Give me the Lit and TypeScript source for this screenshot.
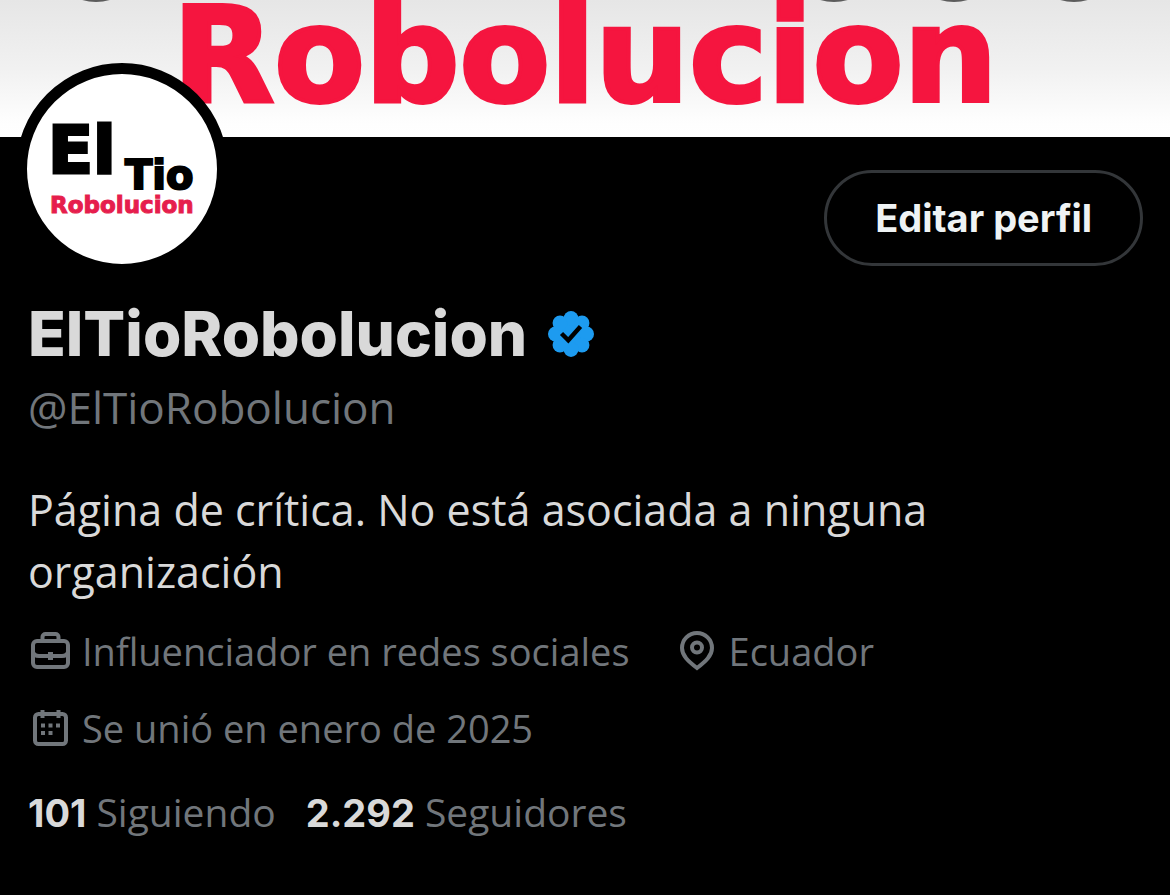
import { LitElement, html, css, svg } from "lit";
import { customElement } from "lit/decorators.js";

const badgeLobes = Array.from({ length: 8 }, (_, i) => {
  const angle = (i * Math.PI) / 4;
  return svg`<circle cx=${24 + 15.6 * Math.sin(angle)} cy=${24 - 15.6 * Math.cos(angle)} r="7.4" />`;
});

@customElement("profile-avatar")
export class ProfileAvatar extends LitElement {
  static styles = css`
    :host {
      display: block;
      width: 190px;
      height: 190px;
      border: 11px solid #000;
      border-radius: 50%;
      background: #fff;
      overflow: hidden;
    }
    .logo {
      display: block;
      width: 100%;
      height: 100%;
      font-family: "DejaVu Sans", sans-serif;
      font-weight: 700;
    }
    .dark {
      fill: #000;
      stroke: #000;
      stroke-width: 2px;
    }
    .red {
      fill: #e61e4d;
      stroke: #e61e4d;
      stroke-width: 1px;
    }
    .large {
      font-size: 66px;
      stroke-width: 3px;
    }
    .medium {
      font-size: 40px;
    }
    .small {
      font-size: 23px;
    }
  `;

  render() {
    return html`
      <svg class="logo" viewBox="0 0 190 190" role="img" aria-label="El Tio Robolucion">
        <text class="dark large" x="21" y="99">El</text>
        <text class="dark medium" x="98" y="115">Tio</text>
        <text class="red small" x="23" y="139">Robolucion</text>
      </svg>
    `;
  }
}

@customElement("app-root")
export class AppRoot extends LitElement {
  static styles = css`
    :host {
      display: block;
      min-height: 100vh;
      background: #000;
      color: #d9d9d9;
      font-family: "Open Sans", "Noto Sans", sans-serif;
    }
    .banner {
      display: grid;
      height: 137px;
      overflow: hidden;
      background: linear-gradient(#e6e6e6 0%, #f1f1f1 50%, #fefefe 90%, #fff 100%);
    }
    .banner-title {
      grid-area: 1 / 1;
      justify-self: center;
      margin: 0;
      color: #f5153f;
      -webkit-text-stroke: 4px #f5153f;
      font-family: "DejaVu Sans", sans-serif;
      font-size: 132px;
      font-weight: 700;
      line-height: 110px;
    }
    .toolbar {
      grid-area: 1 / 1;
      align-self: start;
      display: flex;
      gap: 24px;
      margin-top: -94px;
      padding: 0 48px;
    }
    .tool {
      width: 96px;
      height: 96px;
      padding: 0;
      border: 0;
      border-radius: 50%;
      background: #5c5c5c;
    }
    .tool:first-child {
      margin-right: auto;
    }
    .profile {
      padding: 0 27px 56px 28px;
    }
    .top {
      display: flex;
      align-items: flex-start;
      justify-content: space-between;
    }
    .avatar {
      margin: -74px 0 0 -12px;
    }
    .edit {
      box-sizing: border-box;
      height: 96px;
      margin-top: 33px;
      padding: 0 48px;
      border: 3px solid #333639;
      border-radius: 48px;
      background: #000;
      color: #eff3f4;
      font-family: "Inter", sans-serif;
      font-size: 38px;
      font-weight: 700;
    }
    .name {
      display: flex;
      align-items: center;
      gap: 20px;
      margin: 21px 0 0;
      font-family: "Inter", sans-serif;
      font-size: 62px;
      font-weight: 800;
      line-height: 76px;
    }
    .badge {
      width: 48px;
      height: 48px;
      fill: #1d9bf0;
    }
    .tick {
      fill: none;
      stroke: #000;
      stroke-width: 4.4;
    }
    .handle {
      margin: 5px 0 0;
      color: #71767b;
      font-size: 44px;
      line-height: 60px;
    }
    .bio {
      margin: 42px 0 0;
      font-size: 43px;
      line-height: 62px;
    }
    .meta {
      display: flex;
      flex-wrap: wrap;
      column-gap: 45px;
      margin: 10px 0 0;
      padding: 0;
      list-style: none;
      color: #71767b;
      font-size: 38px;
      line-height: 77px;
    }
    .item {
      display: flex;
      align-items: center;
      gap: 10px;
    }
    .joined {
      flex-basis: 100%;
    }
    .icon {
      width: 44px;
      height: 44px;
      fill: none;
      stroke: #71767b;
      stroke-width: 4;
    }
    .dots {
      fill: #71767b;
      stroke: none;
    }
    .stats {
      display: flex;
      gap: 30px;
      margin-top: 17px;
      font-size: 39px;
      line-height: 56px;
    }
    .stat {
      display: flex;
      align-items: baseline;
      gap: 10px;
      color: #71767b;
      text-decoration: none;
    }
    .count {
      color: #d9d9d9;
      font-family: "Inter", sans-serif;
      font-size: 38px;
      font-weight: 700;
    }
  `;

  render() {
    return html`
      <header class="banner">
        <p class="banner-title">Robolucion</p>
        <nav class="toolbar">
          <button class="tool" aria-label="Atrás"></button>
          <button class="tool" aria-label="Buscar"></button>
          <button class="tool" aria-label="Compartir"></button>
          <button class="tool" aria-label="Más"></button>
        </nav>
      </header>
      <main class="profile">
        <div class="top">
          <profile-avatar class="avatar"></profile-avatar>
          <button class="edit">Editar perfil</button>
        </div>
        <h1 class="name">
          ElTioRobolucion
          <svg class="badge" viewBox="0 0 48 48" role="img" aria-label="Cuenta verificada">
            <circle cx="24" cy="24" r="18" />
            ${badgeLobes}
            <path class="tick" d="M14.5 23.5l6.8 6.8L33.5 16.5" />
          </svg>
        </h1>
        <p class="handle">@ElTioRobolucion</p>
        <p class="bio">Página de crítica. No está asociada a ninguna organización</p>
        <ul class="meta">
          <li class="item">
            <svg class="icon" viewBox="0 0 44 44" aria-hidden="true">
              <rect x="5" y="11" width="35" height="26" rx="4" />
              <path d="M14.5 11V7a3 3 0 0 1 3-3h10a3 3 0 0 1 3 3v4M5 22q1 4 6 4h23q5 0 6-4" />
              <path class="dots" d="M20 22h5v8h-5z" />
            </svg>
            Influenciador en redes sociales
          </li>
          <li class="item">
            <svg class="icon" viewBox="0 0 44 44" aria-hidden="true">
              <path d="M22 38C13 31 7 25.5 7 18a15 15 0 0 1 30 0c0 7.5-6 13-15 20z" />
              <circle cx="22" cy="17.5" r="5" />
            </svg>
            Ecuador
          </li>
          <li class="item joined">
            <svg class="icon" viewBox="0 0 44 44" aria-hidden="true">
              <rect x="7" y="7" width="31" height="30" rx="3.5" />
              <path d="M14.5 3v8M30.5 3v8" />
              <path
                class="dots"
                d="M13 16.5h4v4h-4zM20.5 16.5h4v4h-4zM28 16.5h4v4h-4zM13 24h4v4h-4zM20.5 24h4v4h-4z"
              />
            </svg>
            Se unió en enero de 2025
          </li>
        </ul>
        <nav class="stats">
          <a class="stat" href="#siguiendo"><b class="count">101</b>Siguiendo</a>
          <a class="stat" href="#seguidores"><b class="count">2.292</b>Seguidores</a>
        </nav>
      </main>
    `;
  }
}
